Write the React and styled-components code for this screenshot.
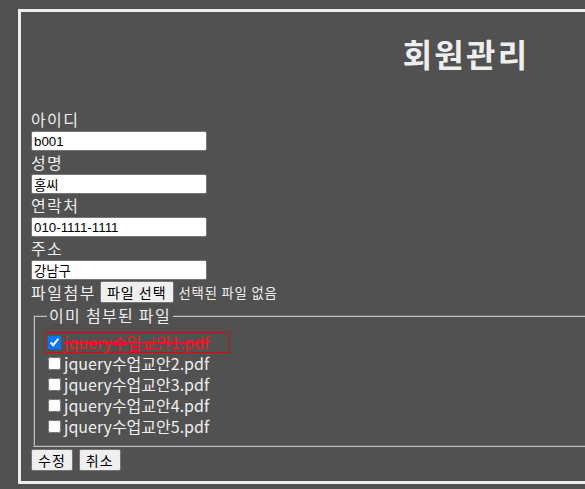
import React from "react";
import styled, { createGlobalStyle } from "styled-components";

const GlobalStyle = createGlobalStyle`
  html, body {
    margin: 0;
    background: #515151;
    overflow: hidden;
  }
  body {
    padding: 9px 0 0 18px;
    font-family: "Noto Sans CJK KR", "Noto Sans", sans-serif;
    color: #eeeeee;
  }
`;

const Panel = styled.div`
  width: 870px;
  padding: 10px;
  border: 3px solid #eeeeee;
`;

const Title = styled.h1`
  margin: 13px 0 36px;
  font-size: 32px;
  line-height: 37px;
  font-weight: 700;
  letter-spacing: 2.2px;
  text-align: center;
  color: #eeeeee;
`;

const Label = styled.div`
  font-size: 16px;
  line-height: 23px;
  letter-spacing: 1.4px;
`;

const TextInput = styled.input`
  display: block;
  box-sizing: border-box;
  width: 176px;
  height: 20px;
  margin: 0;
  padding: 1px 2px;
  border: 1px solid #767676;
  border-radius: 2px;
  background: #ffffff;
  font-family: "Liberation Sans", "Noto Sans CJK KR", sans-serif;
  font-size: 13.33px;
  color: #000000;
`;

const FileRow = styled.div`
  display: flex;
  align-items: center;
  height: 24px;
  font-size: 16px;
  letter-spacing: 1.5px;
`;

const Button = styled.button`
  box-sizing: border-box;
  height: 22px;
  margin: ${(p) => p.$margin || "0"};
  padding: 0 6px;
  border: 1px solid #767676;
  border-radius: 2px;
  background: #efefef;
  color: #000000;
  font-family: "Noto Sans CJK KR", sans-serif;
  font-size: 14px;
  line-height: 20px;
  letter-spacing: 1px;
`;

const Hint = styled.span`
  font-size: 13.33px;
  letter-spacing: 0.8px;
`;

const FileSet = styled.fieldset`
  margin: 1px 2px 0;
  padding: 0 12px 8px;
  border: 2px groove #c0c0c0;
`;

const Legend = styled.legend`
  padding: 0 2px;
  font-size: 16px;
  line-height: 21px;
  letter-spacing: 1.3px;
`;

const FileList = styled.div`
  display: flex;
  flex-direction: column;
  align-items: flex-start;
  padding-top: 6px;
`;

const FileItem = styled.label`
  display: flex;
  align-items: center;
  box-sizing: border-box;
  height: 21px;
  font-size: 16px;
  line-height: 21px;
  color: ${(p) => (p.$removed ? "#e81c1c" : "#eeeeee")};
  text-decoration: ${(p) => (p.$removed ? "line-through" : "none")};
  border: ${(p) => (p.$removed ? "1px solid #b01c1c" : "1px solid transparent")};
  margin-left: -3px;
  padding: 0 ${(p) => (p.$removed ? "20px" : "0")} 0 2px;
`;

const Check = styled.input`
  width: 13px;
  height: 13px;
  margin: 3px 3px 3px 1px;
`;

const Actions = styled.div`
  display: flex;
  gap: 6px;
  margin-top: 2px;
`;

const fields = [
  { label: "아이디", value: "b001" },
  { label: "성명", value: "홍씨" },
  { label: "연락처", value: "010-1111-1111" },
  { label: "주소", value: "강남구" },
];

const files = [1, 2, 3, 4, 5].map((n) => `jquery수업교안${n}.pdf`);

export default function App() {
  return (
    <>
      <GlobalStyle />
      <Panel>
        <Title>회원관리</Title>
        {fields.map((f) => (
          <div key={f.label}>
            <Label>{f.label}</Label>
            <TextInput defaultValue={f.value} />
          </div>
        ))}
        <FileRow>
          파일첨부
          <Button $margin="0 5px 0 4px">파일 선택</Button>
          <Hint>선택된 파일 없음</Hint>
        </FileRow>
        <FileSet>
          <Legend>이미 첨부된 파일</Legend>
          <FileList>
            {files.map((name, i) => (
              <FileItem key={name} $removed={i === 0}>
                <Check type="checkbox" defaultChecked={i === 0} />
                {name}
              </FileItem>
            ))}
          </FileList>
        </FileSet>
        <Actions>
          <Button>수정</Button>
          <Button>취소</Button>
        </Actions>
      </Panel>
    </>
  );
}
